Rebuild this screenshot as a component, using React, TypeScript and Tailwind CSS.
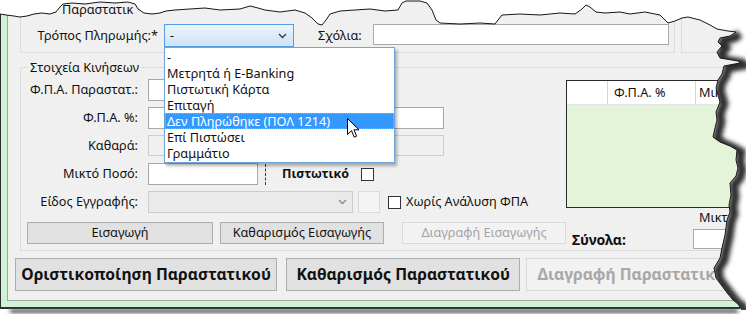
import React from "react";

const topTear: [number, number][] = [
  [0, 14], [6, 15], [14, 16], [20, 17], [27, 16], [34, 14], [42, 13], [50, 14], [56, 12], [60, 7], [63, 4],
  [72, 3], [85, 4], [100, 2], [115, 3], [128, 2], [135, 4], [138, 9], [144, 13], [152, 14], [160, 13],
  [166, 11], [175, 10], [190, 9], [205, 8], [220, 10], [240, 9], [250, 6], [258, 8], [265, 10], [280, 12],
  [295, 10], [305, 13], [312, 18], [318, 24], [322, 25], [326, 20], [330, 14], [340, 11], [355, 10],
  [370, 9], [385, 11], [398, 10], [402, 3], [406, 1], [420, 1], [427, 3], [432, 10], [436, 20], [440, 23],
  [460, 24], [480, 23], [495, 24], [498, 20], [502, 15], [520, 14], [540, 15], [560, 13], [575, 14],
  [582, 9], [586, 5], [590, 7], [596, 12], [605, 13], [620, 12], [630, 14], [645, 12], [655, 14],
  [660, 15], [664, 19], [668, 23], [675, 21], [682, 18], [688, 17], [700, 20], [710, 25], [717, 29],
  [728, 31], [736, 32],
];

const rightTear: [number, number][] = [
  [736, 32], [730, 36], [720, 38], [718, 42], [722, 46], [717, 52], [720, 58], [738, 61], [740, 63],
  [724, 66], [722, 74], [718, 80], [716, 88], [718, 95], [720, 102], [716, 112], [717, 120], [715, 128],
  [713, 137], [720, 142], [730, 146], [737, 150], [736, 160], [738, 168], [736, 176], [730, 183],
  [731, 195], [729, 205], [730, 212], [727, 220], [725, 235], [722, 248], [720, 258], [714, 268],
  [716, 278], [722, 286], [728, 294], [733, 300], [738, 304], [742, 310],
];

const pts = (p: [number, number][]) => p.map(([x, y]) => `${x},${y}`).join(" L");

function Tear() {
  const cut = `M0,0 L${pts(topTear)} L${pts(rightTear)} L746,310 L746,0 Z`;
  return (
    <svg className="absolute left-0 top-0 pointer-events-none" width="746" height="318" viewBox="0 0 746 318">
      <defs>
        <filter id="soft" x="-20%" y="-20%" width="140%" height="140%">
          <feGaussianBlur stdDeviation="2.2" />
        </filter>
        <clipPath id="cutclip">
          <path d={cut} />
        </clipPath>
      </defs>
      <rect x="10" y="309" width="728" height="4" fill="#4a4a4a" filter="url(#soft)" />
      <path d={cut} fill="#ffffff" />
      <g clipPath="url(#cutclip)">
        <path d={`M${pts(rightTear)}`} transform="translate(4,2)" stroke="#2e2e2e" strokeWidth="9" fill="none" filter="url(#soft)" />
      </g>
      <path d={`M${pts(topTear)} L${pts(rightTear)}`} stroke="#161616" strokeWidth="1" fill="none" />
    </svg>
  );
}

function Chevron({ color = "#3c3c3c" }: { color?: string }) {
  return (
    <svg width="9" height="6" viewBox="0 0 9 6">
      <path d="M1 1 L4.5 4.5 L8 1" stroke={color} strokeWidth="1.4" fill="none" />
    </svg>
  );
}

function Box({ w, h = 22, disabled = false }: { w: number; h?: number; disabled?: boolean }) {
  return (
    <div
      className={disabled ? "h-full border border-[#cfcfcf] bg-[#f0f0f0]" : "h-full border border-[#a8a8a8] bg-white"}
      style={{ width: w, height: h }}
    />
  );
}

function Check() {
  return <div className="w-[13px] h-[13px] border border-[#333333] bg-white" />;
}

function Label({ text }: { text: string }) {
  return <div className="w-[117px] text-right whitespace-nowrap">{text}</div>;
}

function Cursor() {
  return (
    <svg className="absolute left-[347px] top-[118px]" width="13" height="21" viewBox="0 0 13 21">
      <path d="M0.5 0.5 L0.5 16.5 L4.5 12.7 L7.2 19.2 L9.6 18.2 L7 11.8 L12 11.8 Z" fill="#ffffff" stroke="#000000" strokeWidth="1" />
    </svg>
  );
}

const options = ["-", "Μετρητά ή E-Banking", "Πιστωτική Κάρτα", "Επιταγή", "Δεν Πληρώθηκε (ΠΟΛ 1214)", "Επί Πιστώσει", "Γραμμάτιο"];

function DropList() {
  return (
    <div className="absolute left-[164px] top-[47px] w-[231px] h-[116px] border border-[#6ea6dc] bg-white pt-[1px] shadow-[2px_3px_3px_rgba(0,0,0,0.3)]">
      {options.map((o, i) => (
        <div
          key={o}
          className={
            i === 4
              ? "h-[16px] leading-[16px] pl-[2px] whitespace-nowrap overflow-hidden bg-[#3399ff] text-white outline-1 outline-dotted outline-[#e8a060] -outline-offset-1"
              : "h-[16px] leading-[16px] pl-[2px] whitespace-nowrap overflow-hidden"
          }
        >
          {o}
        </div>
      ))}
    </div>
  );
}

export default function App() {
  return (
    <div className="relative w-[746px] h-[318px] overflow-hidden bg-white font-['Noto_Sans',sans-serif] text-[12.7px] text-[#111111]">
      <div className="w-[740px] h-[309px] border-l border-b-2 border-[#2e2e2e] bg-[#cdf2d6] pl-[6px] pb-[6px]">
        <div className="h-full border-l border-b border-[#a5a5a5] bg-[#f0f0f0] flex flex-col">
          {/* payment group */}
          <div className="h-[53px] flex shrink-0">
            <div className="ml-[12px] w-[661px] h-full border-l border-r border-b border-[#dcdcdc] flex flex-col">
              <div className="h-[24px] pl-[41px] pt-[3px] leading-[12px] whitespace-nowrap">Παραστατικ</div>
              <div className="h-[23px] flex items-center">
                <div className="w-[137px] text-right whitespace-nowrap">Τρόπος Πληρωμής:*</div>
                <div className="ml-[6px] w-[130px] h-[23px] border border-[#569de5] bg-linear-to-b from-[#ecf4fc] to-[#cde3f8] flex items-center justify-between pl-[5px] pr-[6px]">
                  <span>-</span>
                  <Chevron />
                </div>
                <div className="ml-[24px] w-[55px] whitespace-nowrap">Σχόλια:</div>
                <div className="self-start">
                  <Box w={296} h={21} />
                </div>
              </div>
            </div>
            <div className="ml-[6px] w-[60px] h-full border-l border-b border-[#dcdcdc]" />
          </div>

          {/* movements group */}
          <div className="mt-[14px] ml-[12px] w-[720px] h-[184px] shrink-0 border-l border-t border-b border-[#dcdcdc] relative flex">
            <div className="absolute left-[7px] -top-[9px] px-[2px] bg-[#f0f0f0] leading-[16px] whitespace-nowrap">Στοιχεία Κινήσεων</div>
            <div className="w-[552px] pt-[11px] flex flex-col">
              <div className="h-[22px] flex items-center">
                <Label text="Φ.Π.Α. Παραστατ.:" />
                <div className="ml-[10px]"><Box w={116} /></div>
              </div>
              <div className="mt-[6px] h-[22px] flex items-center">
                <Label text="Φ.Π.Α. %:" />
                <div className="ml-[10px]"><Box w={296} /></div>
              </div>
              <div className="mt-[6px] h-[21px] flex items-center">
                <Label text="Καθαρά:" />
                <div className="ml-[10px]"><Box w={296} h={21} disabled /></div>
              </div>
              <div className="mt-[7px] h-[22px] flex items-center">
                <Label text="Μικτό Ποσό:" />
                <div className="ml-[10px]"><Box w={110} /></div>
                <div className="ml-[7px] h-[21px] border-l border-dashed border-[#3a3a3a]" />
                <div className="ml-[16px] font-bold text-[12.5px] whitespace-nowrap">Πιστωτικό</div>
                <div className="ml-[12px]"><Check /></div>
              </div>
              <div className="mt-[6px] h-[22px] flex items-center">
                <Label text="Είδος Εγγραφής:" />
                <div className="ml-[10px] w-[205px] h-[22px] border border-[#cccccc] bg-[#eaeaea] flex items-center justify-end pr-[5px]">
                  <Chevron color="#8a8a8a" />
                </div>
                <div className="ml-[5px] w-[22px] h-[22px] border border-[#dadada] bg-[#f4f4f4]" />
                <div className="ml-[8px]"><Check /></div>
                <div className="ml-[5px] whitespace-nowrap">Χωρίς Ανάλυση ΦΠΑ</div>
              </div>
              <div className="mt-[9px] h-[22px] flex items-center">
                <button className="ml-[6px] w-[186px] h-[22px] border border-[#adadad] bg-[#e1e1e1]">Εισαγωγή</button>
                <button className="ml-[7px] w-[164px] h-[22px] border border-[#adadad] bg-[#e1e1e1]">Καθαρισμός Εισαγωγής</button>
                <button className="ml-[18px] w-[164px] h-[22px] border border-[#d9d9d9] bg-[#f2f2f2] text-[#a3a3a3]">Διαγραφή Εισαγωγής</button>
              </div>
            </div>
            <div className="flex-1 pt-[12px] flex flex-col">
              <div className="h-[128px] border border-[#2a2a2a] bg-[#e3f4d9] flex flex-col">
                <div className="h-[24px] bg-white flex border-b border-[#e6e6e6]">
                  <div className="w-[41px] border-r border-[#d5d5d5]" />
                  <div className="w-[88px] border-r border-[#d5d5d5] pl-[6px] leading-[23px] whitespace-nowrap">Φ.Π.Α. %</div>
                  <div className="pl-[3px] leading-[23px] whitespace-nowrap">Μικτό</div>
                </div>
              </div>
              <div className="mt-[2px] h-[14px] leading-[14px] pl-[133px] whitespace-nowrap">Μικτό</div>
              <div className="mt-[5px] h-[20px] flex items-center">
                <div className="pl-[6px] w-[127px] font-bold text-[14px] whitespace-nowrap">Σύνολα:</div>
                <Box w={50} h={20} />
              </div>
            </div>
          </div>

          {/* main buttons */}
          <div className="mt-[7px] h-[33px] flex shrink-0">
            <button className="ml-[7px] w-[264px] h-[33px] border border-[#adadad] bg-[#e1e1e1] font-bold text-[15.7px] whitespace-nowrap">Οριστικοποίηση Παραστατικού</button>
            <button className="ml-[9px] w-[236px] h-[33px] border border-[#adadad] bg-[#e1e1e1] font-bold text-[15.7px] whitespace-nowrap">Καθαρισμός Παραστατικού</button>
            <button className="ml-[6px] w-[215px] h-[33px] border border-[#d9d9d9] bg-[#f2f2f2] text-[#a8a8a8] font-bold text-[15.7px] whitespace-nowrap text-left pl-[10px]">Διαγραφή Παραστατικού</button>
          </div>
        </div>
      </div>
      <DropList />
      <Cursor />
      <Tear />
    </div>
  );
}
